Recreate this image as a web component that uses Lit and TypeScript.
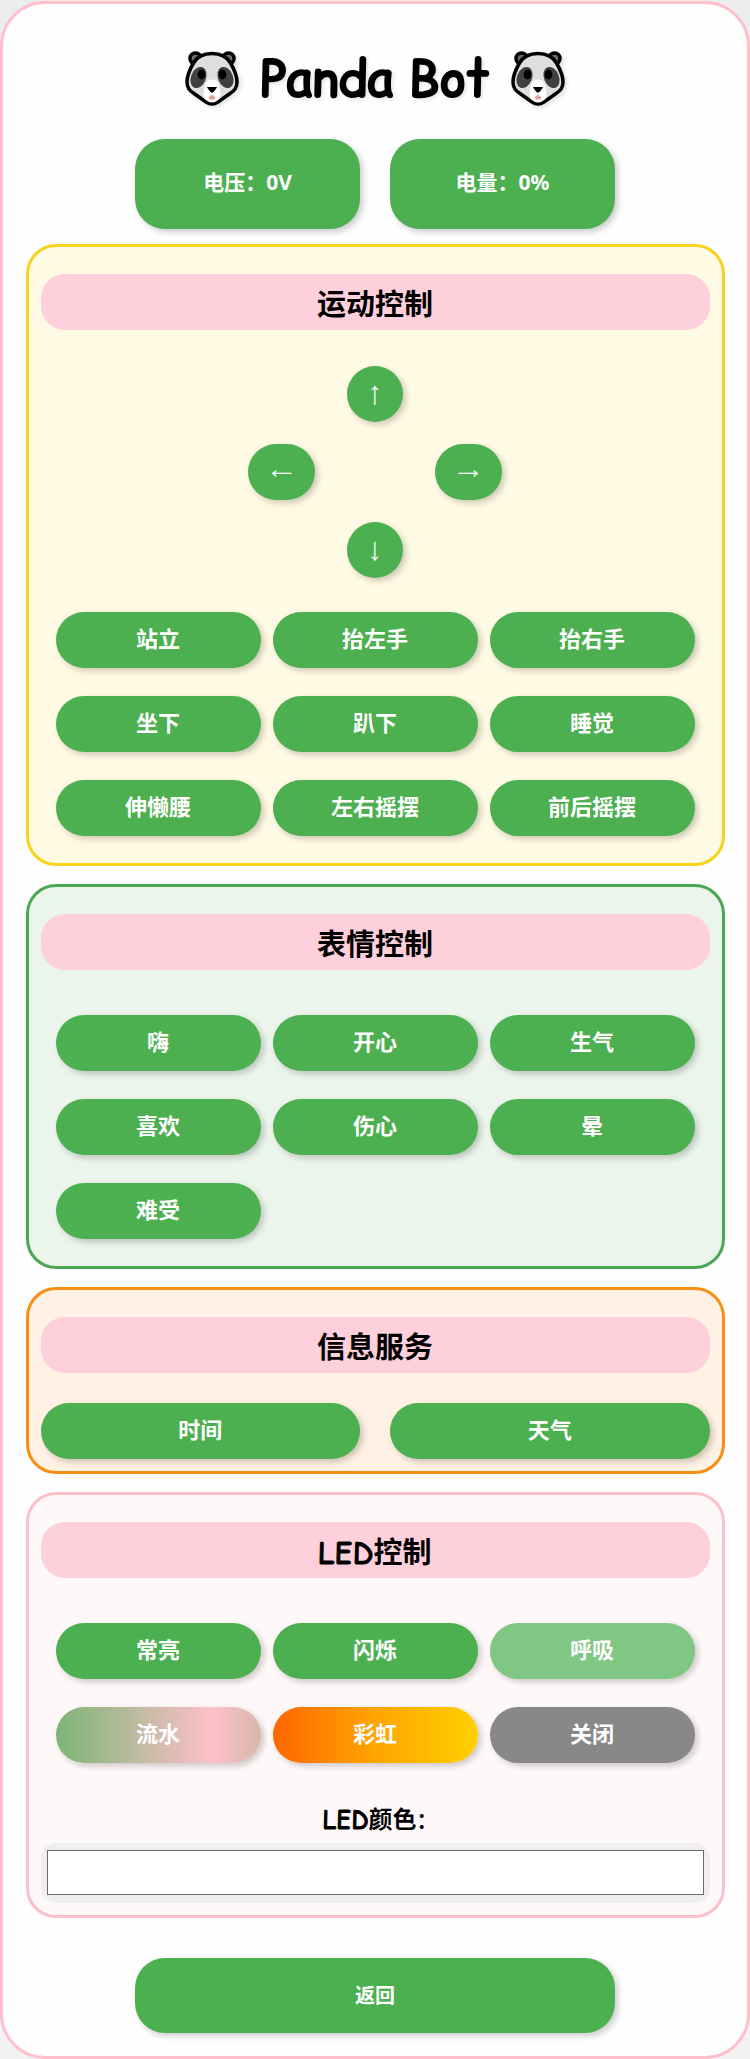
import { LitElement, html, css, svg } from "lit";
import { customElement, property } from "lit/decorators.js";

@customElement("panda-icon")
class PandaIcon extends LitElement {
  static styles = css`
    :host { display: block; }
    svg { display: block; width: 54px; height: 56px; filter: drop-shadow(2px 2px 2px rgba(0, 0, 0, 0.12)); }
  `;
  render() {
    return html`${svg`<svg viewBox="0 0 54 56" aria-hidden="true">
      <circle cx="10.500" cy="7.500" r="5.500" fill="#6b6b6b" stroke="#000" stroke-width="3.500"/>
      <circle cx="43.500" cy="7.500" r="5.500" fill="#6b6b6b" stroke="#000" stroke-width="3.500"/>
      <path d="M27 2.500C18 2.500 12 6 8.500 12C5 18 2 25 2 31C2 37 4.500 39.500 9 42.500L21 51C25 53.500 29 53.500 33 51L45 42.500C49.500 39.500 52 37 52 31C52 25 49 18 45.500 12C42 6 36 2.500 27 2.500Z" fill="#dedede" stroke="#000" stroke-width="3.500"/>
      <path d="M27 28.500C22 28.500 20.500 32 19.500 36C18.500 40 18.500 44 19.500 48L22.500 50C25.500 52 28.500 52 31.500 50L34.500 48C35.500 44 35.500 40 34.500 36C33.500 32 32 28.500 27 28.500Z" fill="#fff"/>
      <ellipse cx="13.500" cy="26.500" rx="7.500" ry="11" fill="#404040" transform="rotate(22 13.500 26.500)"/>
      <ellipse cx="40.500" cy="26.500" rx="7.500" ry="11" fill="#404040" transform="rotate(-22 40.500 26.500)"/>
      <ellipse cx="16.500" cy="23.500" rx="3.800" ry="5" fill="#000"/>
      <ellipse cx="37.500" cy="23.500" rx="3.800" ry="5" fill="#000"/>
      <path d="M22.500 36.500H31.500L28 41H26Z" fill="#000" stroke="#000" stroke-width="1" stroke-linejoin="round"/>
      <path d="M27 43.500L30.500 46.500L29 48.500H25L23.500 46.500Z" fill="#e2a29c"/>
    </svg>`}`;
  }
}

@customElement("app-root")
class AppRoot extends LitElement {
  @property() voltage = "0V";
  @property() charge = "0%";

  static styles = css`
    :host {
      display: block;
      box-sizing: border-box;
      padding-top: 1px;
      background: linear-gradient(180deg, #eceeee, #f2f2f2);
      font-family: "Comic Relief", "Comic Neue", "Noto Sans CJK SC", sans-serif;
      color: #000;
    }
    * { box-sizing: border-box; }
    .shell {
      padding: 37px 3% 23px;
      border: 3px solid #ffc0cb;
      border-radius: 45px;
      background: #fefefe;
    }
    h1, h2 { margin: 0; text-align: center; }
    h1 {
      display: flex;
      justify-content: center;
      align-items: center;
      gap: 21px;
      height: 75px;
      font-size: 50px;
      font-weight: 400;
      line-height: 75px;
      text-shadow: 2px 2px 4px rgba(0, 0, 0, 0.15);
      -webkit-text-stroke: 2px #000;
    }
    button {
      padding: 0 0 4px;
      border: 0;
      border-radius: 30px;
      background: #4caf50;
      color: #fff;
      font: bold 22px/32px "Noto Sans", "Noto Sans CJK SC", sans-serif;
      box-shadow: 3px 3px 6px rgba(0, 0, 0, 0.2);
      min-height: 56px;
      cursor: pointer;
    }
    .status { display: grid; grid-template-columns: 1fr 1fr; gap: 30px; width: 480px; max-width: 100%; margin: 23px auto 15px; }
    .status button { min-height: 90px; font-size: 21px; }
    .panel {
      margin-bottom: 18px;
      padding: 27px 12px 12px;
      border: 3px solid;
      border-radius: 30px;
    }
    .motion { border-color: #f5d31e; background: #fffae3; }
    .face { border-color: #4ca755; background: #ebf5ec; }
    .info { border-color: #f78f14; background: #fff1e3; }
    .led { border-color: #fbc0cc; background: #fff8f8; margin-bottom: 40px; }
    h2 {
      padding-top: 6px;
      border-radius: 24px;
      background: #fed0dc;
      font-size: 29px;
      line-height: 50px;
    }
    .latin { font-weight: 400; -webkit-text-stroke: 1px #000; }
    .pad {
      display: grid;
      grid-template: repeat(3, 56px) / 67px 56px 67px;
      gap: 22px 32px;
      justify-content: center;
      margin-top: 36px;
    }
    .up, .down { grid-column: 2; }
    .left { grid-column: 1; }
    .right { grid-column: 3; }
    .pad button { padding: 0 0 2px; font: 28px/32px "Noto Sans Symbols", "Liberation Serif", serif; }
    .grid { display: grid; grid-template-columns: repeat(3, 1fr); gap: 28px 12px; margin: 45px 15px 15px; }
    .pad + .grid { margin: 34px 15px 15px; }
    .pair { display: grid; grid-template-columns: 1fr 1fr; gap: 30px; margin-top: 30px; }
    .soft { background: #81c784; }
    .flow { background: linear-gradient(90deg, #7cb575, #ffc0cb 77%, #d5b8a9); }
    .rainbow { background: linear-gradient(90deg, #ff6600, #ffa500 50%, #ffd000); }
    .off { background: #888; }
    label { display: block; margin-top: 39px; text-align: center; font-size: 24px; font-weight: bold; line-height: 36px; }
    input {
      display: block;
      width: 100%;
      height: 60px;
      margin-top: 5px;
      padding: 7px 6px 8px;
      border: 0;
      border-radius: 15px;
      background: #efefef;
    }
    input::-webkit-color-swatch-wrapper { padding: 0; }
    input::-webkit-color-swatch { border: 1px solid #696969; }
    .back { display: block; width: 480px; max-width: 100%; min-height: 75px; margin: 0 auto; padding: 0; font-size: 20px; }
  `;

  private buttons(names: string[]) {
    return names.map((n) => html`<button type="button">${n}</button>`);
  }

  render() {
    return html`<main class="shell">
      <h1><panda-icon></panda-icon><span>Panda Bot</span><panda-icon></panda-icon></h1>
      <div class="status">
        <button type="button">电压：${this.voltage}</button>
        <button type="button">电量：${this.charge}</button>
      </div>
      <section class="panel motion">
        <h2>运动控制</h2>
        <div class="pad">
          <button type="button" class="up">↑</button>
          <button type="button" class="left">←</button>
          <button type="button" class="right">→</button>
          <button type="button" class="down">↓</button>
        </div>
        <div class="grid">${this.buttons(["站立", "抬左手", "抬右手", "坐下", "趴下", "睡觉", "伸懒腰", "左右摇摆", "前后摇摆"])}</div>
      </section>
      <section class="panel face">
        <h2>表情控制</h2>
        <div class="grid">${this.buttons(["嗨", "开心", "生气", "喜欢", "伤心", "晕", "难受"])}</div>
      </section>
      <section class="panel info">
        <h2>信息服务</h2>
        <div class="pair">${this.buttons(["时间", "天气"])}</div>
      </section>
      <section class="panel led">
        <h2><span class="latin">LED</span>控制</h2>
        <div class="grid">
          <button type="button">常亮</button>
          <button type="button">闪烁</button>
          <button type="button" class="soft">呼吸</button>
          <button type="button" class="flow">流水</button>
          <button type="button" class="rainbow">彩虹</button>
          <button type="button" class="off">关闭</button>
        </div>
        <label for="color"><span class="latin">LED</span>颜色:</label>
        <input id="color" type="color" value="#ffffff">
      </section>
      <button type="button" class="back">返回</button>
    </main>`;
  }
}
